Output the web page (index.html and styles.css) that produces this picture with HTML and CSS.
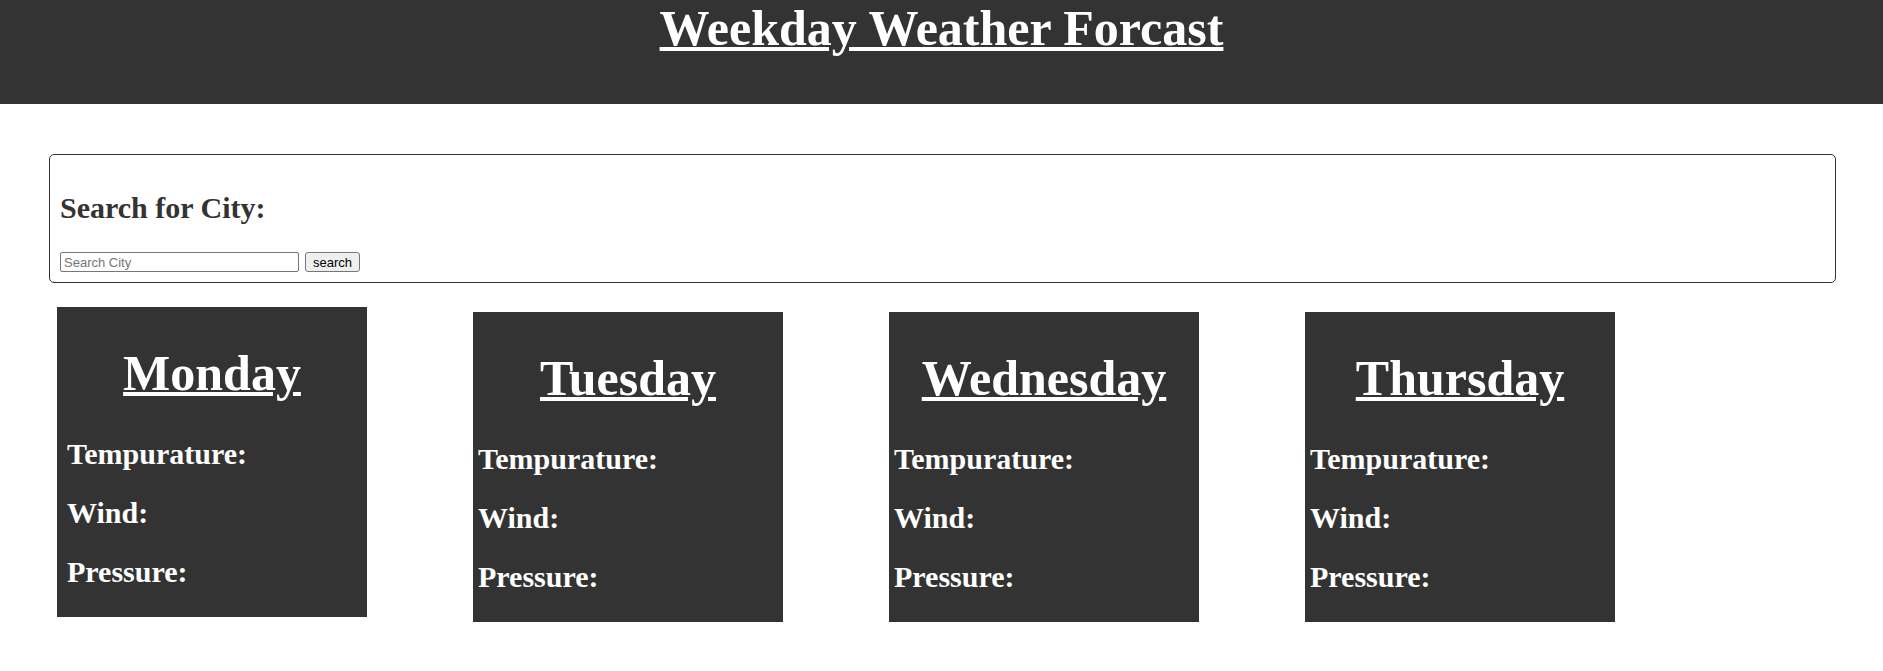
FILE: index.html
```html
<!DOCTYPE html>
<html lang="en">
<head>
<meta charset="utf-8">
<title>Weekday Weather Forcast</title>
<link rel="stylesheet" href="styles.css">
</head>
<body>
<header class="site-header">
  <h1 class="site-title">Weekday Weather Forcast</h1>
</header>
<main>
  <section class="search-box">
    <h2 class="search-title">Search for City:</h2>
    <form class="search-form">
      <input class="search-input" type="text" placeholder="Search City">
      <button class="search-button" type="button">search</button>
    </form>
  </section>
  <section class="cards">
    <div class="card card-first">
      <h2 class="card-day">Monday</h2>
      <p class="card-label">Tempurature:</p>
      <p class="card-label">Wind:</p>
      <p class="card-label">Pressure:</p>
    </div>
    <div class="card">
      <h2 class="card-day">Tuesday</h2>
      <p class="card-label">Tempurature:</p>
      <p class="card-label">Wind:</p>
      <p class="card-label">Pressure:</p>
    </div>
    <div class="card">
      <h2 class="card-day">Wednesday</h2>
      <p class="card-label">Tempurature:</p>
      <p class="card-label">Wind:</p>
      <p class="card-label">Pressure:</p>
    </div>
    <div class="card">
      <h2 class="card-day">Thursday</h2>
      <p class="card-label">Tempurature:</p>
      <p class="card-label">Wind:</p>
      <p class="card-label">Pressure:</p>
    </div>
  </section>
</main>
</body>
</html>
```

FILE: styles.css
```css
html, body {
  margin: 0;
  padding: 0;
  background: #ffffff;
}

body {
  font-family: "Liberation Serif", "Times New Roman", serif;
  color: #333333;
}

.site-header {
  background: #333333;
  height: 104px;
  text-align: center;
  padding-top: 1px;
  box-sizing: border-box;
}

.site-title {
  margin: 0;
  font-size: 50px;
  line-height: 55px;
  font-weight: bold;
  color: #ffffff;
  text-decoration: underline;
  text-decoration-thickness: 4px;
}

.search-box {
  margin: 50px 47px 0 49px;
  border: 1px solid #333333;
  border-radius: 5px;
  padding: 0 10px 10px 10px;
}

.search-title {
  margin: 36px 0 28px;
  font-size: 30px;
  line-height: 33px;
  font-weight: bold;
  color: #333333;
}

.search-form {
  display: flex;
  gap: 6px;
  margin: 0;
}

.search-input {
  box-sizing: border-box;
  width: 239px;
  height: 20px;
  margin: 0;
  padding: 1px 3px;
  font-family: "Liberation Sans", Arial, sans-serif;
  font-size: 13px;
  border: 1px solid #767676;
  border-radius: 2px;
  color: #000;
}

.search-input::placeholder {
  color: #757575;
}

.search-button {
  box-sizing: border-box;
  width: 55px;
  height: 20px;
  margin: 0;
  padding: 0 6px;
  font-family: "Liberation Sans", Arial, sans-serif;
  font-size: 13px;
  color: #000;
  background: #efefef;
  border: 1px solid #767676;
  border-radius: 3px;
}

.cards {
  display: flex;
  align-items: flex-start;
  gap: 106px;
  padding-left: 57px;
  margin-top: 24px;
}

.card {
  width: 310px;
  height: 310px;
  background: #333333;
  color: #ffffff;
  margin-top: 5px;
  box-sizing: border-box;
}

.card-first {
  margin-top: 0;
}

.card-day {
  margin: 39px 0 36px;
  font-size: 50px;
  line-height: 55px;
  font-weight: bold;
  text-align: center;
  text-decoration: underline;
  text-decoration-thickness: 4px;
}

.card-label {
  margin: 0 0 26px;
  padding-left: 5px;
  font-size: 30px;
  line-height: 33px;
  font-weight: bold;
}

.card-first .card-label {
  padding-left: 10px;
}
```
